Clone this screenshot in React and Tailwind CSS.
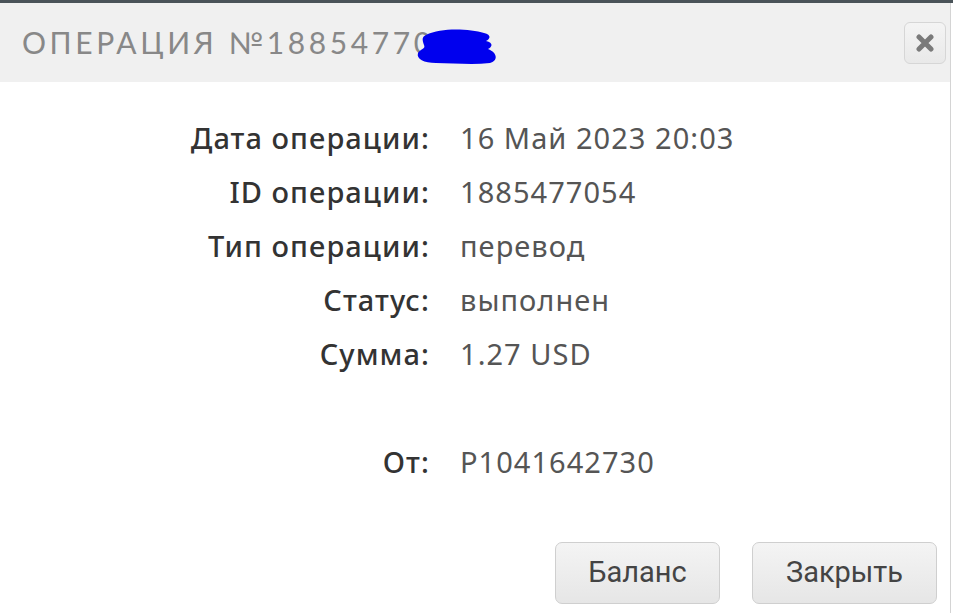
import React from "react";

const rows = [
    ["Дата операции:", "16 Май 2023 20:03"],
    ["ID операции:", "1885477054"],
    ["Тип операции:", "перевод"],
    ["Статус:", "выполнен"],
    ["Сумма:", "1.27 USD"],
    ["", ""],
    ["От:", "P1041642730"],
];

// Blue scribble that hides the end of the operation number
const Scribble = () => (
    <svg width="90" height="42" viewBox="0 0 90 42" className="absolute left-[412px] top-[22px]">
        <path
            d="M14 10 C30 2 58 4 72 8 C80 10 78 14 74 16 C82 18 80 22 76 24 C86 28 86 36 78 38 C60 40 40 38 24 38 C12 38 4 34 6 28 C8 24 14 24 12 20 C10 14 10 12 14 10 Z"
            fill="#0000ee"
        />
    </svg>
);

const Button = ({ children, className = "" }) => (
    <button
        className={`h-[62px] rounded-[7px] border border-[#cfcfcf] bg-gradient-to-b from-[#f4f4f4] to-[#e6e6e6] text-[29px] text-[#444] ${className}`}
        style={{ fontFamily: "Roboto, sans-serif" }}
    >
        {children}
    </button>
);

export default function App() {
    return (
        <div className="w-[953px] h-[613px] bg-white overflow-hidden">
            <div className="h-[3px] bg-[#4a5359]" />
            <div className="w-[951px] h-[610px] border-r border-[#d4d4d4] flex flex-col">
                {/* header */}
                <div className="relative h-[79px] bg-[#f0f0f0] flex items-center pl-[22px]">
                    <h1
                        className="text-[30px] tracking-[0.12em] text-[#888]"
                        style={{ fontFamily: "Lato, 'Open Sans', sans-serif" }}
                    >
                        ОПЕРАЦИЯ №18854770
                    </h1>
                    <Scribble />
                    <button className="absolute right-[4px] top-[19px] w-[42px] h-[42px] rounded-[6px] border border-[#d6d6d6] bg-gradient-to-b from-[#f4f4f4] to-[#e9e9e9] flex items-center justify-center">
                        <svg width="18" height="18" viewBox="0 0 18 18">
                            <path d="M3 3 L15 15 M15 3 L3 15" stroke="#7a7a7a" strokeWidth="5" strokeLinecap="round" />
                        </svg>
                    </button>
                </div>

                {/* details */}
                <div
                    className="pt-[29px] grid grid-cols-[428px_1fr] gap-x-[32px] tracking-[0.065em]"
                    style={{ fontFamily: "'Noto Sans', sans-serif" }}
                >
                    {rows.map(([label, value], i) => (
                        <React.Fragment key={i}>
                            <div className="h-[54px] flex items-center justify-end text-[29px] font-medium text-[#333] -mr-[0.065em]">
                                {label}
                            </div>
                            <div className="h-[54px] flex items-center text-[29px] text-[#555]">
                                {value}
                            </div>
                        </React.Fragment>
                    ))}
                </div>

                {/* buttons */}
                <div className="mt-auto mb-[9px] flex justify-end gap-[32px] pr-[13px]">
                    <Button className="w-[165px]">Баланс</Button>
                    <Button className="w-[185px]">Закрыть</Button>
                </div>
            </div>
        </div>
    );
}
